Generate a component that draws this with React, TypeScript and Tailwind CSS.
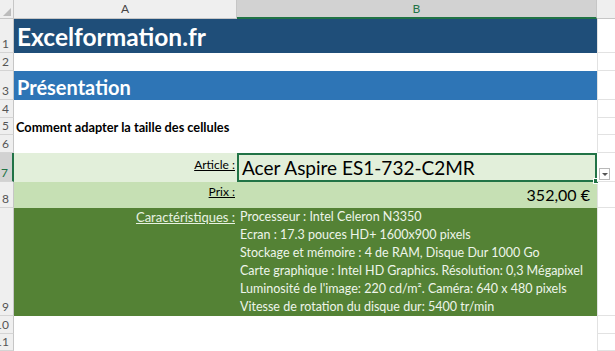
import React from "react";

const rowHeights = [34, 18, 29, 18, 17, 18, 29, 26, 108, 18, 17];

function RowHeader({ n, h, selected }: { n: number; h: number; selected?: boolean }) {
  return (
    <div
      className={
        "w-[14px] shrink-0 flex justify-end items-end overflow-hidden border-b border-b-[#d4d4d4] border-r " +
        (selected ? "bg-[#d2d2d2] border-r-2 border-r-[#217346] text-[#217346]" : "bg-[#efefef] border-r-[#c6c6c6] text-[#555]")
      }
      style={{ height: h }}
    >
      <span className="text-[12px] leading-[14px] pr-[4px] pb-[1px] whitespace-nowrap">{n}</span>
    </div>
  );
}

const lines = [
  "Processeur : Intel Celeron N3350",
  "Ecran : 17.3 pouces HD+ 1600x900 pixels",
  "Stockage et mémoire : 4 de RAM, Disque Dur 1000 Go",
  "Carte graphique : Intel HD Graphics. Résolution: 0,3 Mégapixel",
  "Luminosité de l'image: 220 cd/m². Caméra: 640 x 480 pixels",
  "Vitesse de rotation du disque dur: 5400 tr/min",
];

export default function App() {
  const C = ({ h }: { h: number }) => (
    <div className="flex-1 border-b border-b-[#e2e2e2] border-l border-l-[#e2e2e2] bg-white" style={{ height: h }} />
  );
  return (
    <div className="w-[615px] h-[351px] overflow-hidden bg-white font-['Lato',sans-serif] text-black">
      {/* column headers */}
      <div className="flex h-[19px]">
        <div className="w-[14px] shrink-0 bg-[#efefef] border-r border-b border-[#c6c6c6] relative">
          <div className="absolute right-[2px] bottom-[2px] w-0 h-0 border-l-[8px] border-l-transparent border-b-[8px] border-b-[#bcbcbc]" />
        </div>
        <div className="w-[223px] shrink-0 bg-[#efefef] border-r border-b border-[#c6c6c6] flex items-center justify-center text-[12px] text-[#444]">
          A
        </div>
        <div className="w-[360px] shrink-0 bg-[#d2d2d2] border-r border-r-[#c6c6c6] border-b-2 border-b-[#217346] flex items-center justify-center text-[12px] text-[#217346]">
          B
        </div>
        <div className="flex-1 bg-[#efefef] border-b border-[#c6c6c6]" />
      </div>

      {/* row 1 */}
      <div className="flex">
        <RowHeader n={1} h={rowHeights[0]} />
        <div className="w-[583px] shrink-0 bg-[#1f4e79] flex items-center pl-[3px] pt-[2px]" style={{ height: rowHeights[0] }}>
          <span className="text-white font-bold text-[24.5px] leading-none whitespace-nowrap">Excelformation.fr</span>
        </div>
        <C h={rowHeights[0]} />
      </div>

      {/* row 2 */}
      <div className="flex">
        <RowHeader n={2} h={rowHeights[1]} />
        <div className="w-[583px] shrink-0 bg-white" style={{ height: rowHeights[1] }} />
        <C h={rowHeights[1]} />
      </div>

      {/* row 3 */}
      <div className="flex">
        <RowHeader n={3} h={rowHeights[2]} />
        <div className="w-[583px] shrink-0 bg-[#2e75b6] flex items-center pl-[3px] pt-[2px]" style={{ height: rowHeights[2] }}>
          <span className="text-white font-bold text-[20px] leading-none whitespace-nowrap">Présentation</span>
        </div>
        <C h={rowHeights[2]} />
      </div>

      {/* row 4 */}
      <div className="flex">
        <RowHeader n={4} h={rowHeights[3]} />
        <div className="w-[583px] shrink-0 bg-white" style={{ height: rowHeights[3] }} />
        <C h={rowHeights[3]} />
      </div>

      {/* row 5 */}
      <div className="flex">
        <RowHeader n={5} h={rowHeights[4]} />
        <div className="w-[583px] shrink-0 bg-white flex items-center pl-[2px] pt-[2px]" style={{ height: rowHeights[4] }}>
          <span className="font-bold text-[12.75px] leading-none whitespace-nowrap">Comment adapter la taille des cellules</span>
        </div>
        <C h={rowHeights[4]} />
      </div>

      {/* row 6 */}
      <div className="flex">
        <RowHeader n={6} h={rowHeights[5]} />
        <div className="w-[583px] shrink-0 bg-white" style={{ height: rowHeights[5] }} />
        <C h={rowHeights[5]} />
      </div>

      {/* row 7 */}
      <div className="flex">
        <RowHeader n={7} h={rowHeights[6]} selected />
        <div className="w-[223px] shrink-0 bg-[#e2efda] flex items-center justify-end pr-[2px] pb-[5px]" style={{ height: rowHeights[6] }}>
          <span className="text-[12px] leading-none underline whitespace-nowrap">Article :</span>
        </div>
        <div className="w-[360px] shrink-0 bg-[#e2efda] border-2 border-[#217346] relative flex items-center pl-[3px]" style={{ height: rowHeights[6] }}>
          <span className="text-[19px] leading-none whitespace-nowrap">Acer Aspire ES1-732-C2MR</span>
          <div className="absolute right-[-4px] bottom-[-4px] w-[6px] h-[6px] bg-[#217346] border border-white" />
        </div>
        <div className="flex-1 border-b border-b-[#e2e2e2] bg-white relative" style={{ height: rowHeights[6] }}>
          <div className="absolute left-[2px] top-[15px] w-[11px] h-[12px] bg-white border border-[#b8b8b8] flex items-center justify-center">
            <div className="w-0 h-0 border-l-[3px] border-r-[3px] border-t-[3px] border-l-transparent border-r-transparent border-t-[#555]" />
          </div>
        </div>
      </div>

      {/* row 8 */}
      <div className="flex">
        <RowHeader n={8} h={rowHeights[7]} />
        <div className="w-[223px] shrink-0 bg-[#c6e0b4] flex items-center justify-end pr-[2px] pb-[6px]" style={{ height: rowHeights[7] }}>
          <span className="text-[12px] leading-none underline whitespace-nowrap">Prix :</span>
        </div>
        <div className="w-[360px] shrink-0 bg-[#c6e0b4] flex items-center justify-end pr-[7px]" style={{ height: rowHeights[7] }}>
          <span className="text-[16px] leading-none whitespace-nowrap">352,00 €</span>
        </div>
        <C h={rowHeights[7]} />
      </div>

      {/* row 9 */}
      <div className="flex">
        <RowHeader n={9} h={rowHeights[8]} />
        <div className="w-[223px] shrink-0 bg-[#548235] flex justify-end pr-[2px]" style={{ height: rowHeights[8] }}>
          <span className="text-[13px] leading-[18px] underline whitespace-nowrap text-[#e8f2e1]">Caractéristiques :</span>
        </div>
        <div className="w-[360px] shrink-0 bg-[#548235] flex flex-col pl-[3px]" style={{ height: rowHeights[8] }}>
          {lines.map((l) => (
            <span key={l} className="text-[12.5px] leading-[18px] whitespace-nowrap text-[#eef5ea]">
              {l}
            </span>
          ))}
        </div>
        <C h={rowHeights[8]} />
      </div>

      {/* rows 10-11 */}
      <div className="flex">
        <RowHeader n={10} h={rowHeights[9]} />
        <div className="w-[583px] shrink-0 bg-white" style={{ height: rowHeights[9] }} />
        <C h={rowHeights[9]} />
      </div>
      <div className="flex">
        <RowHeader n={11} h={rowHeights[10]} />
        <div className="w-[583px] shrink-0 bg-white" style={{ height: rowHeights[10] }} />
        <C h={rowHeights[10]} />
      </div>
    </div>
  );
}
